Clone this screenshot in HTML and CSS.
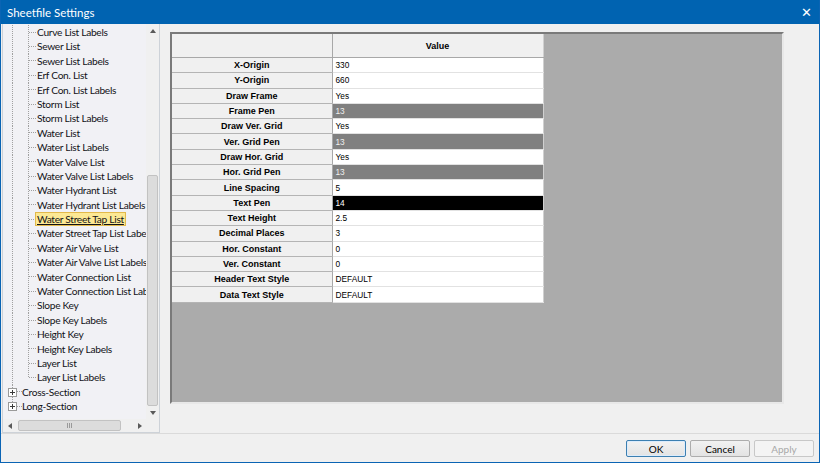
FILE: index.html
```html
<!DOCTYPE html>
<html lang="en">
<head>
    <meta charset="UTF-8">
    <title>Sheetfile Settings</title>
    <link rel="stylesheet" href="styles.css">
</head>
<body>
    <div class="window">
        <div class="titlebar">
            <span class="title">Sheetfile Settings</span>
            <span class="close">&#x2715;</span>
        </div>

        <div class="content">
            <!-- Tree met de lijsten -->
            <div class="tree">
                <div class="tree-view">
                    <div class="item leaf">Curve List Labels</div>
                    <div class="item leaf">Sewer List</div>
                    <div class="item leaf">Sewer List Labels</div>
                    <div class="item leaf">Erf Con. List</div>
                    <div class="item leaf">Erf Con. List Labels</div>
                    <div class="item leaf">Storm List</div>
                    <div class="item leaf">Storm List Labels</div>
                    <div class="item leaf">Water List</div>
                    <div class="item leaf">Water List Labels</div>
                    <div class="item leaf">Water Valve List</div>
                    <div class="item leaf">Water Valve List Labels</div>
                    <div class="item leaf">Water Hydrant List</div>
                    <div class="item leaf">Water Hydrant List Labels</div>
                    <div class="item leaf"><span class="selected">Water Street Tap List</span></div>
                    <div class="item leaf">Water Street Tap List Labels</div>
                    <div class="item leaf">Water Air Valve List</div>
                    <div class="item leaf">Water Air Valve List Labels</div>
                    <div class="item leaf">Water Connection List</div>
                    <div class="item leaf">Water Connection List Labels</div>
                    <div class="item leaf">Slope Key</div>
                    <div class="item leaf">Slope Key Labels</div>
                    <div class="item leaf">Height Key</div>
                    <div class="item leaf">Height Key Labels</div>
                    <div class="item leaf">Layer List</div>
                    <div class="item leaf last">Layer List Labels</div>
                    <div class="item root"><span class="expander"></span>Cross-Section</div>
                    <div class="item root last"><span class="expander"></span>Long-Section</div>
                </div>
                <div class="vscroll">
                    <span class="arrow up"></span>
                    <div class="track"><div class="thumb"></div></div>
                    <span class="arrow down"></span>
                </div>
                <div class="hscroll">
                    <span class="arrow left"></span>
                    <div class="track"><div class="thumb"><span class="grip"></span></div></div>
                    <span class="arrow right"></span>
                </div>
                <div class="corner"></div>
            </div>

            <!-- Eigenschappen -->
            <div class="grid-area">
                <table class="grid">
                    <colgroup>
                        <col class="col-name">
                        <col class="col-value">
                    </colgroup>
                    <tr>
                        <th class="name-head"></th>
                        <th class="value-head">Value</th>
                    </tr>
                    <tr><td class="name">X-Origin</td><td class="value">330</td></tr>
                    <tr><td class="name">Y-Origin</td><td class="value">660</td></tr>
                    <tr><td class="name">Draw Frame</td><td class="value">Yes</td></tr>
                    <tr><td class="name">Frame Pen</td><td class="value pen-gray">13</td></tr>
                    <tr><td class="name">Draw Ver. Grid</td><td class="value">Yes</td></tr>
                    <tr><td class="name">Ver. Grid Pen</td><td class="value pen-gray">13</td></tr>
                    <tr><td class="name">Draw Hor. Grid</td><td class="value">Yes</td></tr>
                    <tr><td class="name">Hor. Grid Pen</td><td class="value pen-gray">13</td></tr>
                    <tr><td class="name">Line Spacing</td><td class="value">5</td></tr>
                    <tr><td class="name">Text Pen</td><td class="value pen-black">14</td></tr>
                    <tr><td class="name">Text Height</td><td class="value">2.5</td></tr>
                    <tr><td class="name">Decimal Places</td><td class="value">3</td></tr>
                    <tr><td class="name">Hor. Constant</td><td class="value">0</td></tr>
                    <tr><td class="name">Ver. Constant</td><td class="value">0</td></tr>
                    <tr><td class="name">Header Text Style</td><td class="value">DEFAULT</td></tr>
                    <tr><td class="name">Data Text Style</td><td class="value">DEFAULT</td></tr>
                </table>
            </div>
        </div>

        <div class="footer">
            <button class="btn default">OK</button>
            <button class="btn">Cancel</button>
            <button class="btn" disabled>Apply</button>
        </div>
    </div>
</body>
</html>
```

FILE: styles.css
```css
body {
    margin: 0;
    background: #ffffff;
    font-family: Lato, "Noto Sans", sans-serif;
}
.window {
    width: 820px;
    height: 463px;
    box-sizing: border-box;
    border: 1px solid #0a64b4;
    border-top: 0;
    background-color: #f0f0f0;
    display: flex;
    flex-direction: column;
}
.titlebar {
    height: 24px;
    flex: none;
    background-color: #0063b1;
    color: #ffffff;
    display: flex;
    align-items: center;
    justify-content: space-between;
    padding: 0 7px 0 6px;
    font-size: 11.5px;
}
.close {
    font-size: 13px;
}
.content {
    flex: 1;
    display: flex;
    min-height: 0;
}
/* Tree */
.tree {
    width: 158px;
    margin-left: 1px;
    box-sizing: border-box;
    border: 1px solid #cdd2d8;
    border-top: 0;
    background-color: #f1f1f5;
    display: grid;
    grid-template-columns: 1fr 13px;
    grid-template-rows: 1fr 13px;
}
.tree-view {
    overflow: hidden;
    padding-top: 1px;
    font-size: 10.2px;
    letter-spacing: -0.3px;
    color: #111318;
}
.item {
    height: 14.4px;
    line-height: 14.4px;
    white-space: nowrap;
    background-repeat: no-repeat;
}
.leaf {
    padding-left: 34px;
    background-image:
        repeating-linear-gradient(#a0a0a0 0 1px, transparent 1px 2px),
        repeating-linear-gradient(#a0a0a0 0 1px, transparent 1px 2px),
        repeating-linear-gradient(to right, #a0a0a0 0 1px, transparent 1px 2px);
    background-position: 9px 0, 25px 0, 26px 50%;
    background-size: 1px 100%, 1px 100%, 7px 1px;
}
.leaf.last {
    background-size: 1px 100%, 1px 50%, 7px 1px;
}
.root {
    padding-left: 5px;
    background-image:
        repeating-linear-gradient(#a0a0a0 0 1px, transparent 1px 2px),
        repeating-linear-gradient(to right, #a0a0a0 0 1px, transparent 1px 2px);
    background-position: 9px 0, 14px 50%;
    background-size: 1px 100%, 5px 1px;
}
.root.last {
    background-size: 1px 50%, 5px 1px;
}
.expander {
    display: inline-block;
    position: relative;
    width: 7px;
    height: 7px;
    border: 1px solid #9a9a9a;
    background-color: #ffffff;
    vertical-align: -1px;
    margin-right: 5px;
}
.expander::before,
.expander::after {
    content: "";
    position: absolute;
    background-color: #3a3a3a;
}
.expander::before {
    left: 1px;
    top: 3px;
    width: 5px;
    height: 1px;
}
.expander::after {
    left: 3px;
    top: 1px;
    width: 1px;
    height: 5px;
}
.selected {
    margin-left: -2px;
    padding: 0 1px;
    border: 1px solid #e2b94c;
    background-color: #fce894;
    text-decoration: underline;
}
/* Scrollbars */
.vscroll {
    display: flex;
    flex-direction: column;
    background-color: #f0f0f0;
}
.hscroll {
    display: flex;
    background-color: #f0f0f0;
}
.track {
    flex: 1;
    position: relative;
}
.vscroll .thumb {
    position: absolute;
    left: 1px;
    right: 1px;
    top: 138px;
    bottom: 0;
    background-color: #dcdcdc;
    border: 1px solid #c2c2c2;
    border-radius: 2px;
}
.hscroll .thumb {
    position: absolute;
    top: 1px;
    bottom: 1px;
    left: 2px;
    width: 101px;
    background-color: #dcdcdc;
    border: 1px solid #c2c2c2;
    border-radius: 2px;
    display: flex;
    justify-content: center;
    align-items: center;
}
.grip {
    width: 5px;
    height: 5px;
    background: repeating-linear-gradient(to right, #9a9a9a 0 1px, transparent 1px 2px);
}
.arrow {
    flex: none;
    width: 13px;
    height: 13px;
    display: flex;
    align-items: center;
    justify-content: center;
}
.arrow::before {
    content: "";
    border: 3px solid transparent;
}
.arrow.up::before {
    border-bottom: 4px solid #5a5a5a;
    border-top: 0;
}
.arrow.down::before {
    border-top: 4px solid #5a5a5a;
    border-bottom: 0;
}
.arrow.left::before {
    border-right: 4px solid #5a5a5a;
    border-left: 0;
}
.arrow.right::before {
    border-left: 4px solid #5a5a5a;
    border-right: 0;
}
.corner {
    background-color: #f0f0f0;
}
/* Eigenschappen raster */
.grid-area {
    width: 614px;
    height: 372px;
    box-sizing: border-box;
    margin: 8px 0 0 10px;
    border: 2px solid;
    border-color: #7a7a7a #e8e8e8 #e8e8e8 #7a7a7a;
    background-color: #ababab;
}
.grid {
    border-collapse: collapse;
    font-family: "Liberation Sans", Arial, sans-serif;
    color: #000000;
}
.col-name {
    width: 160px;
}
.col-value {
    width: 211px;
}
.grid th {
    height: 23px;
    padding: 0;
    background-color: #f0f0f0;
    border-bottom: 1px solid #a8a8a8;
    font-size: 9px;
}
.name-head {
    border-right: 1px solid #a8a8a8;
}
.value-head {
    border-right: 1px solid #d0d0d0;
}
.grid td {
    height: 14.3px;
    padding: 0;
    line-height: 14px;
}
.name {
    background-color: #f0f0f0;
    text-align: center;
    font-weight: bold;
    font-size: 9px;
    border-bottom: 1px solid #b4b4b4;
    border-right: 1px solid #a8a8a8;
}
.value {
    background-color: #ffffff;
    font-size: 8.3px;
    padding-left: 3px !important;
    border-bottom: 1px solid #e2e2e2;
    border-right: 1px solid #d0d0d0;
}
.pen-gray {
    background-color: #808080;
    color: #f0f0f0;
}
.pen-black {
    background-color: #000000;
    color: #ffffff;
}
/* Knoppen */
.footer {
    height: 29px;
    flex: none;
    box-sizing: border-box;
    border-top: 1px solid #dadada;
    display: flex;
    justify-content: flex-end;
    align-items: flex-start;
    gap: 4px;
    padding: 6px 5px 0 0;
}
.btn {
    width: 60px;
    height: 17px;
    padding: 0;
    font-family: Lato, "Noto Sans", sans-serif;
    font-size: 10px;
    color: #000000;
    background: linear-gradient(#f2f2f2, #e3e3e3);
    border: 1px solid #adadad;
    border-radius: 2px;
}
.btn.default {
    border-color: #3c7fb1;
    box-shadow: inset 0 0 0 1px #dcecfc;
}
.btn:disabled {
    color: #a8a8a8;
    border-color: #c8c8c8;
    background: #f4f4f4;
}
```
